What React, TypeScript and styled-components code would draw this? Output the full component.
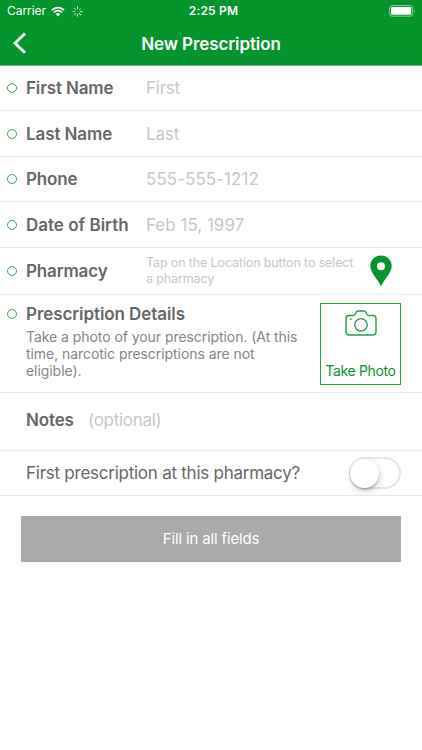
import React from "react";
import styled, { createGlobalStyle } from "styled-components";

const GREEN = "#04952d";

const GlobalStyle = createGlobalStyle`
  *, *::before, *::after { box-sizing: border-box; }
  body { margin: 0; background: #fff; font-family: Inter, "Liberation Sans", sans-serif; }
`;

const Screen = styled.main`
  width: 422px;
  height: 750px;
  overflow: hidden;
  background: #fff;
`;

const Header = styled.header`
  height: 66px;
  border-bottom: 1px solid #70bd87;
  background: ${GREEN};
  color: #fff;
`;

const StatusBar = styled.div`
  display: grid;
  grid-template-columns: 1fr auto 1fr;
  align-items: center;
  height: 22px;
  padding: 0 6px 0 7px;
`;

const StatusGroup = styled.div<{ $end?: boolean }>`
  display: flex;
  align-items: center;
  justify-content: ${(p) => (p.$end ? "flex-end" : "flex-start")};
`;

const Carrier = styled.span`
  width: 44px;
  font-size: 12px;
  line-height: 22px;
  letter-spacing: -0.05px;
  white-space: nowrap;
`;

const Clock = styled.span`
  padding-left: 4px;
  font-size: 12px;
  font-weight: 600;
  line-height: 22px;
  letter-spacing: 0.2px;
`;

const NavBar = styled.div`
  display: grid;
  grid-template-columns: 40px 1fr 40px;
  align-items: center;
  height: 43px;
`;

const BackButton = styled.button`
  display: flex;
  width: 40px;
  height: 43px;
  padding: 10px 0 0 12px;
  border: 0;
  background: none;
`;

const Title = styled.h1`
  margin: 0;
  font-size: 17px;
  font-weight: 600;
  line-height: 42px;
  letter-spacing: -0.1px;
  text-align: center;
`;

const Row = styled.div<{ $h: number }>`
  display: flex;
  align-items: center;
  height: ${(p) => p.$h}px;
  padding-right: 21px;
  border-bottom: 1px solid #e8e8ea;
`;

const Marker = styled.span`
  flex: none;
  width: 10px;
  height: 10px;
  margin: 0 9px 0 7px;
  border: 1px solid #35a456;
  border-radius: 50%;
`;

const Label = styled.span<{ $w?: number; $ls?: number }>`
  flex: none;
  width: ${(p) => (p.$w ? `${p.$w}px` : "auto")};
  color: #666;
  font-size: 17px;
  font-weight: 600;
  line-height: 22px;
  letter-spacing: ${(p) => p.$ls ?? -0.15}px;
  white-space: nowrap;
`;

const Placeholder = styled.span<{ $ls?: number }>`
  color: #c6c6ca;
  font-size: 17px;
  line-height: 22px;
  letter-spacing: ${(p) => p.$ls ?? -0.3}px;
  white-space: nowrap;
`;

const Hint = styled.span`
  flex: 1;
  color: #c6c6ca;
  font-size: 12.5px;
  line-height: 16px;
  letter-spacing: -0.13px;
  white-space: nowrap;
`;

const PinButton = styled.button`
  display: flex;
  padding: 0;
  margin-right: 9px;
  border: 0;
  background: none;
`;

const DetailsRow = styled.section`
  display: flex;
  align-items: flex-start;
  height: 98px;
  padding: 8px 21px 0 0;
  border-bottom: 1px solid #e8e8ea;
`;

const MarkerSlot = styled.div`
  display: flex;
  align-items: center;
  height: 22px;
`;

const DetailsText = styled.div`
  flex: 1;
`;

const Description = styled.p`
  margin: 3px 0 0;
  color: #858585;
  font-size: 14px;
  line-height: 17px;
  letter-spacing: -0.06px;
  white-space: nowrap;
`;

const PhotoButton = styled.button`
  display: flex;
  flex-direction: column;
  align-items: center;
  justify-content: space-between;
  flex: none;
  width: 81px;
  height: 82px;
  padding: 6px 0 5px;
  border: 1px solid #209f47;
  background: #fff;
  color: ${GREEN};
  font: 14px/17px Inter, sans-serif;
  letter-spacing: -0.35px;
  white-space: nowrap;
`;

const NotesRow = styled(Row)`
  padding-left: 26px;
  padding-bottom: 3px;
`;

const QuestionRow = styled(Row)`
  justify-content: space-between;
  padding-left: 26px;
`;

const Question = styled.span`
  color: #666;
  font-size: 17px;
  letter-spacing: -0.25px;
  white-space: nowrap;
`;

const Toggle = styled.button`
  width: 52px;
  height: 32px;
  margin-bottom: 1px;
  padding: 0;
  border: 2px solid #e5e5e6;
  border-radius: 16px;
  background: #fff;
`;

const Knob = styled.span`
  display: block;
  width: 29px;
  height: 29px;
  margin-left: -1px;
  border-radius: 50%;
  background: #fff;
  box-shadow: 0 2px 2px rgba(0, 0, 0, 0.2), 1px 3px 7px rgba(0, 0, 0, 0.16);
`;

const SubmitButton = styled.button`
  display: block;
  width: 380px;
  height: 46px;
  margin: 20px 0 0 21px;
  padding: 0;
  border: 0;
  background: #aaa;
  color: #fff;
  font: 15px/46px Inter, sans-serif;
  letter-spacing: -0.15px;
`;

const WifiIcon = () => (
  <svg width="14" height="11" viewBox="0 0 14 11" fill="none">
    <path d="M.9 4.1a8.7 8.7 0 0 1 12.2 0M3 6.3a5.7 5.7 0 0 1 8 0" stroke="#fff" strokeWidth="1.8" />
    <path d="M4.7 8a3.3 3.3 0 0 1 4.6 0L7 10.4z" fill="#fff" />
  </svg>
);

const SPOKES = [1, 0.45, 0.9, 1, 1, 0.7, 0.65, 0.6];

const Spinner = () => (
  <svg width="11" height="11" viewBox="-5.5 -5.5 11 11" stroke="#fff" strokeWidth="1">
    {SPOKES.map((opacity, i) => (
      <path key={i} d="M0-2.3V-5" opacity={opacity * 0.85} transform={`rotate(${i * 45})`} />
    ))}
  </svg>
);

const StatusIcons = styled.div`
  display: flex;
  align-items: center;
  gap: 7px;
`;

const Battery = () => (
  <svg width="27" height="12" viewBox="0 0 27 12">
    <rect x=".6" y=".6" width="23" height="10.6" rx="2.4" fill="none" stroke="#8ccd9c" />
    <rect x="2" y="2" width="20.2" height="7.8" rx="1" fill="#fff" />
    <path d="M25 4.2q1.5 1.6 0 3.4z" fill="#8ccd9c" />
  </svg>
);

const Pin = () => (
  <svg width="22" height="32" viewBox="0 0 22 32">
    <path
      fillRule="evenodd"
      d="M11 .5C5 .5.3 5.1.3 11c0 6.8 7.4 13 10.7 20.3C14.3 24 21.7 17.8 21.7 11 21.7 5.1 17 .5 11 .5zm0 6.8a4 4 0 1 0 0 8 4 4 0 0 0 0-8z"
      fill={GREEN}
    />
  </svg>
);

const CameraIcon = () => (
  <svg width="32" height="26" viewBox="0 0 32 26" fill="none" stroke="#209f47" strokeWidth="1.4">
    <path d="M4 5.5h4.2c1 0 1.6-.4 2-1.3l.7-1.7c.4-1 1.1-1.5 2.2-1.5h5.8c1.1 0 1.8.5 2.2 1.5l.7 1.7c.4.9 1 1.3 2 1.3H28c1.9 0 3 1.1 3 3V22c0 1.9-1.1 3-3 3H4c-1.9 0-3-1.1-3-3V8.5c0-1.9 1.1-3 3-3z" />
    <circle cx="16" cy="14.8" r="6.2" />
    <circle cx="6" cy="9.2" r=".6" fill="#209f47" strokeWidth=".6" />
  </svg>
);

const FIELDS = [
  { label: "First Name", hint: "First", h: 45, labelSpacing: -0.15, hintSpacing: -0.25 },
  { label: "Last Name", hint: "Last", h: 46, labelSpacing: -0.1, hintSpacing: -0.15 },
  { label: "Phone", hint: "555-555-1212", h: 45, labelSpacing: -0.15, hintSpacing: 0.05 },
  { label: "Date of Birth", hint: "Feb 15, 1997", h: 46, labelSpacing: 0, hintSpacing: 0 },
];

export default function App() {
  return (
    <>
      <GlobalStyle />
      <Screen>
        <Header>
          <StatusBar>
            <StatusGroup>
              <Carrier>Carrier</Carrier>
              <StatusIcons>
                <WifiIcon />
                <Spinner />
              </StatusIcons>
            </StatusGroup>
            <Clock>2:25 PM</Clock>
            <StatusGroup $end>
              <Battery />
            </StatusGroup>
          </StatusBar>
          <NavBar>
            <BackButton aria-label="Back">
              <svg width="15" height="22" viewBox="0 0 15 22" fill="none" stroke="#fff" strokeWidth="2.8">
                <path d="M13 1.5 3 11.2l10 9.6" />
              </svg>
            </BackButton>
            <Title>New Prescription</Title>
          </NavBar>
        </Header>
        {FIELDS.map((field) => (
          <Row key={field.label} $h={field.h}>
            <Marker />
            <Label $w={120} $ls={field.labelSpacing}>
              {field.label}
            </Label>
            <Placeholder $ls={field.hintSpacing}>{field.hint}</Placeholder>
          </Row>
        ))}
        <Row $h={47}>
          <Marker />
          <Label $w={120}>Pharmacy</Label>
          <Hint>
            Tap on the Location button to select
            <br />a pharmacy
          </Hint>
          <PinButton aria-label="Location">
            <Pin />
          </PinButton>
        </Row>
        <DetailsRow>
          <MarkerSlot>
            <Marker />
          </MarkerSlot>
          <DetailsText>
            <Label $ls={-0.08}>Prescription Details</Label>
            <Description>
              Take a photo of your prescription. (At this
              <br />
              time, narcotic prescriptions are not
              <br />
              eligible).
            </Description>
          </DetailsText>
          <PhotoButton>
            <CameraIcon />
            Take Photo
          </PhotoButton>
        </DetailsRow>
        <NotesRow $h={58}>
          <Label $w={62}>Notes</Label>
          <Placeholder>(optional)</Placeholder>
        </NotesRow>
        <QuestionRow $h={45}>
          <Question>First prescription at this pharmacy?</Question>
          <Toggle role="switch" aria-checked={false}>
            <Knob />
          </Toggle>
        </QuestionRow>
        <SubmitButton>Fill in all fields</SubmitButton>
      </Screen>
    </>
  );
}
